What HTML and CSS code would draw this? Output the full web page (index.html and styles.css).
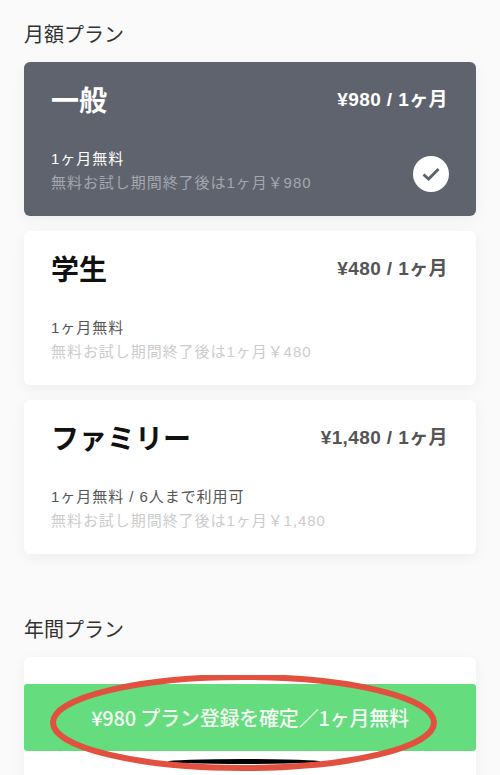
FILE: index.html
```html
<!DOCTYPE html>
<html lang="ja">
<head>
    <meta charset="UTF-8">
    <meta name="viewport" content="width=device-width, initial-scale=1.0">
    <title>プラン選択</title>
    <link rel="stylesheet" href="styles.css">
</head>
<body>
    <main class="plans">
        <h2 class="section-title">月額プラン</h2>
        <div class="plan-list">
            <div class="plan plan-selected">
                <div class="plan-head">
                    <span class="plan-name">一般</span>
                    <span class="plan-price">¥980 / 1ヶ月</span>
                </div>
                <p class="plan-note">1ヶ月無料</p>
                <p class="plan-after">無料お試し期間終了後は1ヶ月￥980</p>
                <span class="plan-check">
                    <svg width="18" height="14" viewBox="0 0 18 14"><path d="M1.5 7.5 L6.6 12 L16.5 2" fill="none" stroke="#5f636e" stroke-width="3"/></svg>
                </span>
            </div>
            <div class="plan">
                <div class="plan-head">
                    <span class="plan-name">学生</span>
                    <span class="plan-price">¥480 / 1ヶ月</span>
                </div>
                <p class="plan-note">1ヶ月無料</p>
                <p class="plan-after">無料お試し期間終了後は1ヶ月￥480</p>
            </div>
            <div class="plan">
                <div class="plan-head">
                    <span class="plan-name">ファミリー</span>
                    <span class="plan-price">¥1,480 / 1ヶ月</span>
                </div>
                <p class="plan-note">1ヶ月無料 / 6人まで利用可</p>
                <p class="plan-after">無料お試し期間終了後は1ヶ月￥1,480</p>
            </div>
        </div>

        <h2 class="section-title section-year">年間プラン</h2>
        <div class="plan plan-cut"></div>
    </main>

    <div class="confirm">¥980 プラン登録を確定／1ヶ月無料</div>
    <div class="sliver"></div>
    <svg class="circle-mark" width="500" height="120" viewBox="0 0 500 120">
        <ellipse cx="243.5" cy="47.5" rx="190.5" ry="45.5" fill="none" stroke="#e2503f" stroke-width="6"/>
    </svg>
</body>
</html>
```

FILE: styles.css
```css
body {
    margin: 0;
    height: 775px;
    overflow: hidden;
    position: relative;
    background-color: #fafafa;
    font-family: "Liberation Sans", "Noto Sans CJK JP", sans-serif;
}
p {
    margin: 0;
}
.plans {
    padding: 23px 24px 0;
}
.section-title {
    margin: 0 0 15px;
    font-size: 20px;
    line-height: 24px;
    font-weight: 400;
    color: #333;
}
.section-year {
    margin-top: 64px;
}
.plan-list {
    display: flex;
    flex-direction: column;
    gap: 15px;
}
.plan {
    position: relative;
    height: 154px;
    box-sizing: border-box;
    padding: 19px 28px 0 27px;
    background-color: #fff;
    border-radius: 6px;
    box-shadow: 0 4px 14px rgba(0, 0, 0, 0.05);
    color: #555;
}
.plan-head {
    display: flex;
    justify-content: space-between;
    align-items: center;
    height: 36px;
    margin-bottom: 30px;
}
.plan-name {
    font-size: 28px;
    font-weight: 700;
    color: #111;
}
.plan-price {
    margin-bottom: 3px;
    font-size: 19px;
    font-weight: 700;
    letter-spacing: 0.4px;
}
.plan-note {
    font-size: 15px;
    line-height: 24px;
    letter-spacing: 0.95px;
}
.plan-after {
    font-size: 15px;
    line-height: 24px;
    letter-spacing: 0.95px;
    color: #ccc;
}
.plan-selected {
    background-color: #5f636e;
    color: #fff;
}
.plan-selected .plan-name {
    color: #fff;
}
.plan-selected .plan-after {
    color: #a4a7ae;
}
.plan-check {
    position: absolute;
    right: 27px;
    bottom: 24px;
    width: 36px;
    height: 36px;
    border-radius: 50%;
    background-color: #fff;
    display: flex;
    justify-content: center;
    align-items: center;
}
.confirm {
    position: absolute;
    left: 24px;
    top: 684px;
    width: 452px;
    height: 67px;
    border-radius: 3px;
    background-color: #65dc7e;
    color: #f4fbf5;
    font-size: 20px;
    font-weight: 500;
    letter-spacing: -0.2px;
    font-family: "Noto Sans CJK JP", sans-serif;
    display: flex;
    justify-content: center;
    align-items: center;
}
.sliver {
    position: absolute;
    left: 168px;
    top: 759px;
    width: 152px;
    height: 5px;
    border-radius: 50%;
    background-color: #000;
}
.circle-mark {
    position: absolute;
    left: 0;
    top: 675px;
}
```
